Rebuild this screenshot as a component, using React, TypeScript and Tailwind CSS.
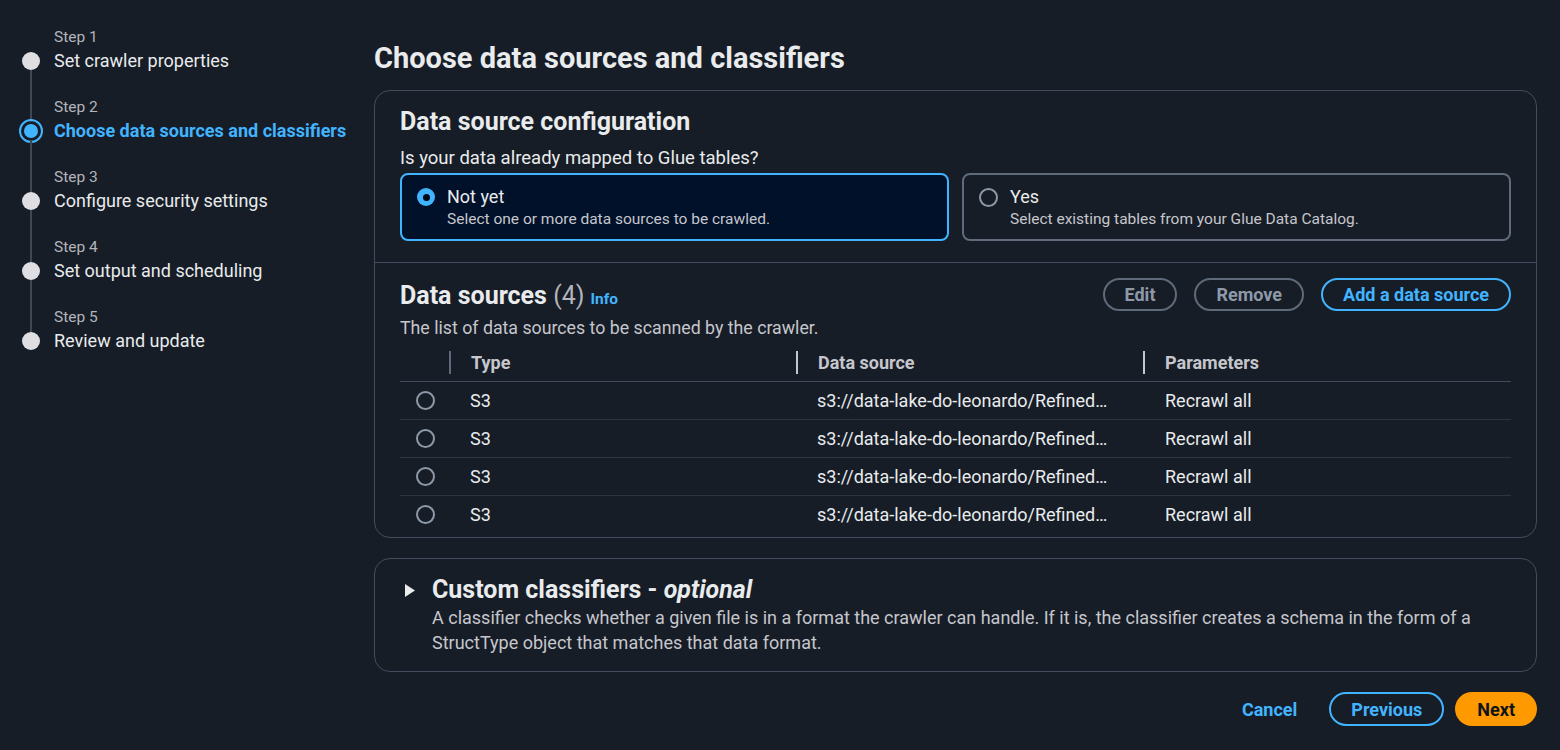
import { Fragment } from "react";

const steps = [
  { n: 1, title: "Set crawler properties" },
  { n: 2, title: "Choose data sources and classifiers", active: true },
  { n: 3, title: "Configure security settings" },
  { n: 4, title: "Set output and scheduling" },
  { n: 5, title: "Review and update" },
];

const rows = Array.from({ length: 4 }, () => ({
  type: "S3",
  source: "s3://data-lake-do-leonardo/Refined…",
  params: "Recrawl all",
}));

const StepNav = () => (
  <nav className="w-[374px] shrink-0 pl-5 pt-[27px]">
    {steps.map((s, i) => (
      <div key={s.n} className="flex">
        <div className="flex w-[22px] flex-col items-center mr-[12px]">
          <div className={i === 0 ? "h-[25px] w-[2px]" : "h-[25px] w-[2px] bg-[#424650]"} />
          {s.active ? (
            <div className="-my-[3px] flex h-[24px] w-[24px] shrink-0 items-center justify-center rounded-full border-2 border-[#42b4ff]">
              <div className="h-[14px] w-[14px] rounded-full bg-[#42b4ff]" />
            </div>
          ) : (
            <div className="h-[18px] w-[18px] shrink-0 rounded-full bg-[#dedee3]" />
          )}
          <div className={i < steps.length - 1 ? "w-[2px] flex-1 bg-[#424650]" : "w-[2px] flex-1"} />
        </div>
        <div className="pb-[22px]">
          <div className="text-[15.5px] leading-[20px] text-[#b4b4bb]">Step {s.n}</div>
          <div
            className={
              s.active
                ? "text-[18px] leading-[28px] font-bold text-[#42b4ff]"
                : "text-[18px] leading-[28px] text-[#e9ebed]"
            }
          >
            {s.title}
          </div>
        </div>
      </div>
    ))}
  </nav>
);

const Radio = ({ checked }: { checked?: boolean }) =>
  checked ? (
    <div className="flex h-[18px] w-[18px] items-center justify-center rounded-full bg-[#42b4ff]">
      <div className="h-[7px] w-[7px] rounded-full bg-[#000716]" />
    </div>
  ) : (
    <div className="h-[19px] w-[19px] rounded-full border-2 border-[#8d99a8]" />
  );

const Tile = ({
  checked,
  label,
  desc,
}: {
  checked?: boolean;
  label: string;
  desc: string;
}) => (
  <div
    className={
      checked
        ? "flex h-[68px] flex-1 gap-[12px] rounded-[8px] border-2 border-[#42b4ff] bg-[#001129] pl-[15px] pr-[14px] pt-[10px]"
        : "flex h-[68px] flex-1 gap-[12px] rounded-[8px] border-2 border-[#5f6b7a] pl-[15px] pr-[14px] pt-[10px]"
    }
  >
    <div className="pt-[3px]">
      <Radio checked={checked} />
    </div>
    <div>
      <div className="text-[18px] leading-[24px] text-[#e9ebed]">{label}</div>
      <div className="text-[15.5px] leading-[20px] text-[#c6c6cd]">{desc}</div>
    </div>
  </div>
);

const Pill = ({ children, variant }: { children: string; variant: "muted" | "blue" }) => (
  <button
    className={
      variant === "blue"
        ? "h-[33px] rounded-full border-2 border-[#42b4ff] px-[20px] text-[18px] font-bold text-[#42b4ff]"
        : "h-[33px] rounded-full border-2 border-[#5f6b7a] px-[20px] text-[18px] font-bold text-[#8d99a8]"
    }
  >
    {children}
  </button>
);

const HeaderCell = ({ children, divider }: { children?: string; divider?: string }) => (
  <div className="flex h-[37px] items-center">
    {divider && <div className={`h-[23px] w-[2px] mr-[20px] ${divider}`} />}
    <span className="text-[18px] font-bold text-[#c6c6cd]">{children}</span>
  </div>
);

export default function App() {
  return (
    <div
      className="flex min-h-[750px] w-[1560px] bg-[#161d26] text-[#e9ebed]"
      style={{ fontFamily: "Roboto, 'Open Sans', sans-serif" }}
    >
      <StepNav />
      <main className="w-[1163px] pt-[39px]">
        <h1 className="text-[29px] leading-[38px] font-bold text-[#e9ebed]">
          Choose data sources and classifiers
        </h1>

        <section className="mt-[13px] rounded-[16px] border border-[#414d5c]">
          <div className="px-[25px] pt-[16px] pb-[21px]">
            <h2 className="text-[25px] leading-[30px] font-bold">Data source configuration</h2>
            <p className="mt-[9px] text-[18.5px] leading-[24px] text-[#e9ebed]">
              Is your data already mapped to Glue tables?
            </p>
            <div className="mt-[3px] flex gap-[13px]">
              <Tile checked label="Not yet" desc="Select one or more data sources to be crawled." />
              <Tile label="Yes" desc="Select existing tables from your Glue Data Catalog." />
            </div>
          </div>
          <div className="h-px bg-[#414d5c]" />
          <div className="px-[25px] pt-[18px]">
            <div className="flex items-start justify-between">
              <div>
                <div className="flex items-baseline gap-[6px]">
                  <h2 className="text-[25px] leading-[30px] font-bold">
                    Data sources <span className="font-normal text-[#b4b4bb]">(4)</span>
                  </h2>
                  <span className="text-[15.5px] font-bold text-[#42b4ff]">Info</span>
                </div>
                <p className="mt-[5px] text-[17.75px] leading-[24px] text-[#c6c6cd]">
                  The list of data sources to be scanned by the crawler.
                </p>
              </div>
              <div className="mt-[-3px] flex gap-[17px]">
                <Pill variant="muted">Edit</Pill>
                <Pill variant="muted">Remove</Pill>
                <Pill variant="blue">Add a data source</Pill>
              </div>
            </div>

            <div className="mt-[4px] grid grid-cols-[49px_347px_347px_1fr] text-[18px]">
              <HeaderCell />
              <HeaderCell divider="bg-[#5f6b7a]">Type</HeaderCell>
              <HeaderCell divider="bg-[#c6c6cd]">Data source</HeaderCell>
              <HeaderCell divider="bg-[#c6c6cd]">Parameters</HeaderCell>
              <div className="col-span-4 h-px bg-[#414d5c]" />
              {rows.map((r, i) => (
                <Fragment key={i}>
                  <div className="flex h-[37px] items-center pl-[16px]">
                    <Radio />
                  </div>
                  <div className="flex items-center pl-[21px] text-[#e9ebed]">{r.type}</div>
                  <div className="flex items-center overflow-hidden pl-[21px] pr-[20px]">
                    <span className="truncate">{r.source}</span>
                  </div>
                  <div className="flex items-center pl-[22px]">{r.params}</div>
                  {i < rows.length - 1 && <div className="col-span-4 h-px bg-[#2c343f]" />}
                </Fragment>
              ))}
            </div>
          </div>
          <div className="h-[4px]" />
        </section>

        <section className="mt-[20px] rounded-[16px] border border-[#414d5c] px-[25px] pt-[16px] pb-[16px]">
          <div className="flex gap-[12px]">
            <svg width="20" height="30" viewBox="0 0 20 30" className="shrink-0">
              <path d="M5 9 L15 15.5 L5 22 Z" fill="#e9ebed" />
            </svg>
            <div>
              <h2 className="text-[25px] leading-[30px] font-bold">
                Custom classifiers - <i>optional</i>
              </h2>
              <p className="text-[18px] leading-[25px] text-[#c6c6cd]">
                A classifier checks whether a given file is in a format the crawler can handle. If it is, the classifier creates a schema in the form of a StructType object that matches that data format.
              </p>
            </div>
          </div>
        </section>

        <div className="mt-[20px] flex items-center justify-end">
          <button className="mr-[12px] px-[20px] text-[18px] font-bold text-[#42b4ff]">Cancel</button>
          <button className="h-[34px] rounded-full border-2 border-[#42b4ff] px-[20px] text-[18px] font-bold text-[#42b4ff]">
            Previous
          </button>
          <button className="ml-[11px] h-[34px] rounded-full bg-[#ff9900] px-[22px] text-[18px] font-bold text-[#0f141a]">
            Next
          </button>
        </div>
      </main>
    </div>
  );
}
